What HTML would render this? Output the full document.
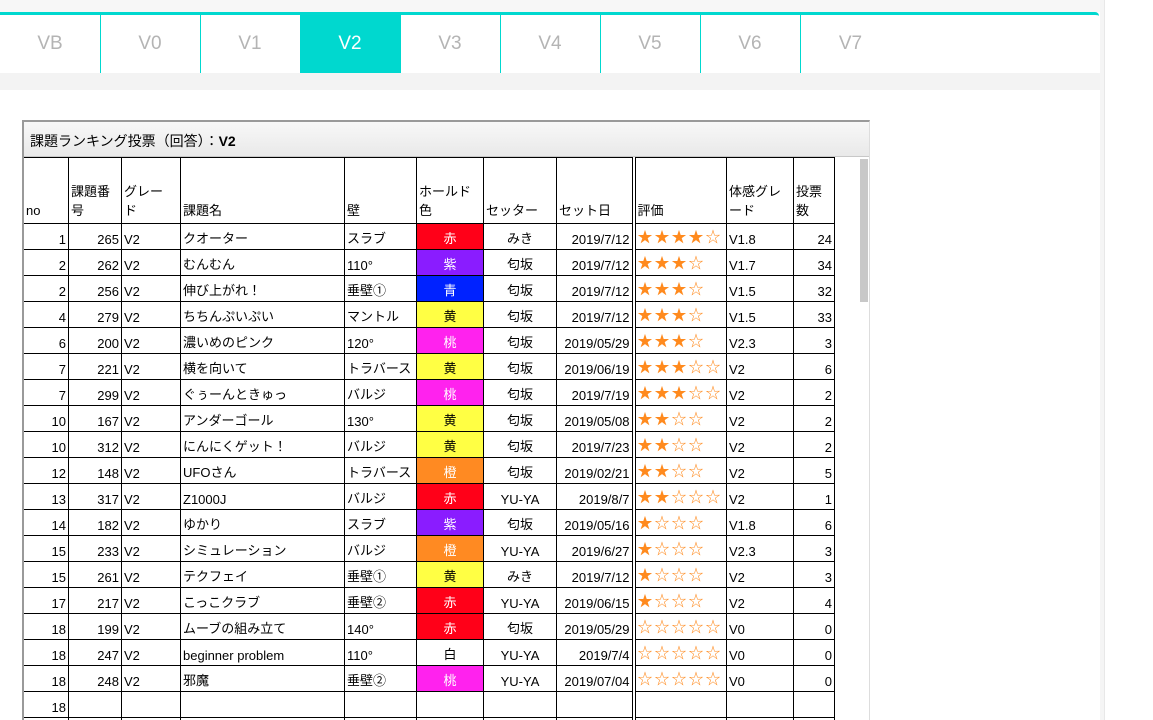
<!DOCTYPE html>
<html><head><meta charset="utf-8"><style>
body{margin:0;width:1153px;height:720px;overflow:hidden;background:#fff;font-family:"Liberation Sans","Noto Sans CJK JP",sans-serif;position:relative}
.top{position:absolute;left:0;top:0;width:1100px;height:12px;background:#f7f7f7}
.tabs{position:absolute;left:0;top:12px;width:1099px;height:58px;border-top:3px solid #00d8cf;background:#fff;border-top-right-radius:4px}
.tab{position:absolute;top:0;width:101px;height:58px;line-height:58px;text-align:center;color:#b4b4b4;font-size:19px;border-right:1px solid #00d8cf;box-sizing:border-box}
.tab.on{background:#00d8cf;color:#fff}
.band{position:absolute;left:0;top:73px;width:1100px;height:17px;background:#f3f3f3}
.rline{position:absolute;left:1100px;top:0;width:4px;height:720px;background:#f5f5f5;border-right:1px solid #e8e8e8}
.panel{position:absolute;left:22px;top:120px;width:848px;height:600px;border:2px solid #9a9a9a;border-bottom:none;border-right:1px solid #ddd;background:#fff;overflow:hidden;box-sizing:border-box}
.hd{height:34px;line-height:38px;padding-left:6px;font-size:14px;background:linear-gradient(#f8f8f8,#e9e9e9);border-bottom:1px solid #c8c8c8}
.sb{position:absolute;left:836px;top:37px;width:8px;height:143px;background:#c8c8c8}
table{border-collapse:collapse;table-layout:fixed;font-size:13px;margin-left:-1px}
td{border:1px solid #000;height:23px;padding:0 2px;vertical-align:bottom;padding-bottom:2px;white-space:nowrap;overflow:hidden}
tr.h td{height:62px;line-height:19px;padding-bottom:3px}
.r{text-align:right}.c{text-align:center}
.d{border-right:4px double #000}
.s{color:#ff8a1e;font-size:15px;letter-spacing:2px}
</style></head><body>
<div class="top"></div>
<div class="rline"></div>
<div class="tabs">
<div class="tab" style="left:0">VB</div><div class="tab" style="left:100px">V0</div><div class="tab" style="left:200px">V1</div><div class="tab on" style="left:300px">V2</div><div class="tab" style="left:400px">V3</div><div class="tab" style="left:500px">V4</div><div class="tab" style="left:600px">V5</div><div class="tab" style="left:700px">V6</div><div class="tab" style="left:800px;border-right:none">V7</div>
</div>
<div class="band"></div>
<div class="panel">
<div class="hd">課題ランキング投票（回答）：<b>V2</b></div>
<div class="sb"></div>
<table>
<colgroup><col style="width:45px"><col style="width:53px"><col style="width:59px"><col style="width:164px"><col style="width:72px"><col style="width:67px"><col style="width:73px"><col style="width:77px"><col style="width:93px"><col style="width:67px"><col style="width:41px"></colgroup>
<tr class="h"><td>no</td><td>課題番<br>号</td><td>グレー<br>ド</td><td>課題名</td><td>壁</td><td>ホールド<br>色</td><td>セッター</td><td class="d">セット日</td><td>評価</td><td>体感グレ<br>ード</td><td>投票<br>数</td></tr>
<tr><td class="r">1</td><td class="r">265</td><td>V2</td><td>クオーター</td><td>スラブ</td><td class="c" style="background:#ff0018;color:#fff">赤</td><td class="c">みき</td><td class="r d">2019/7/12</td><td class="s">★★★★☆</td><td>V1.8</td><td class="r">24</td></tr>
<tr><td class="r">2</td><td class="r">262</td><td>V2</td><td>むんむん</td><td>110°</td><td class="c" style="background:#8a1cff;color:#fff">紫</td><td class="c">匂坂</td><td class="r d">2019/7/12</td><td class="s">★★★☆</td><td>V1.7</td><td class="r">34</td></tr>
<tr><td class="r">2</td><td class="r">256</td><td>V2</td><td>伸び上がれ！</td><td>垂壁①</td><td class="c" style="background:#0022ff;color:#fff">青</td><td class="c">匂坂</td><td class="r d">2019/7/12</td><td class="s">★★★☆</td><td>V1.5</td><td class="r">32</td></tr>
<tr><td class="r">4</td><td class="r">279</td><td>V2</td><td>ちちんぷいぷい</td><td>マントル</td><td class="c" style="background:#ffff44">黄</td><td class="c">匂坂</td><td class="r d">2019/7/12</td><td class="s">★★★☆</td><td>V1.5</td><td class="r">33</td></tr>
<tr><td class="r">6</td><td class="r">200</td><td>V2</td><td>濃いめのピンク</td><td>120°</td><td class="c" style="background:#ff22ee;color:#fff">桃</td><td class="c">匂坂</td><td class="r d">2019/05/29</td><td class="s">★★★☆</td><td>V2.3</td><td class="r">3</td></tr>
<tr><td class="r">7</td><td class="r">221</td><td>V2</td><td>横を向いて</td><td>トラバース</td><td class="c" style="background:#ffff44">黄</td><td class="c">匂坂</td><td class="r d">2019/06/19</td><td class="s">★★★☆☆</td><td>V2</td><td class="r">6</td></tr>
<tr><td class="r">7</td><td class="r">299</td><td>V2</td><td>ぐぅーんときゅっ</td><td>バルジ</td><td class="c" style="background:#ff22ee;color:#fff">桃</td><td class="c">匂坂</td><td class="r d">2019/7/19</td><td class="s">★★★☆☆</td><td>V2</td><td class="r">2</td></tr>
<tr><td class="r">10</td><td class="r">167</td><td>V2</td><td>アンダーゴール</td><td>130°</td><td class="c" style="background:#ffff44">黄</td><td class="c">匂坂</td><td class="r d">2019/05/08</td><td class="s">★★☆☆</td><td>V2</td><td class="r">2</td></tr>
<tr><td class="r">10</td><td class="r">312</td><td>V2</td><td>にんにくゲット！</td><td>バルジ</td><td class="c" style="background:#ffff44">黄</td><td class="c">匂坂</td><td class="r d">2019/7/23</td><td class="s">★★☆☆</td><td>V2</td><td class="r">2</td></tr>
<tr><td class="r">12</td><td class="r">148</td><td>V2</td><td>UFOさん</td><td>トラバース</td><td class="c" style="background:#ff8a22;color:#fff">橙</td><td class="c">匂坂</td><td class="r d">2019/02/21</td><td class="s">★★☆☆</td><td>V2</td><td class="r">5</td></tr>
<tr><td class="r">13</td><td class="r">317</td><td>V2</td><td>Z1000J</td><td>バルジ</td><td class="c" style="background:#ff0018;color:#fff">赤</td><td class="c">YU-YA</td><td class="r d">2019/8/7</td><td class="s">★★☆☆☆</td><td>V2</td><td class="r">1</td></tr>
<tr><td class="r">14</td><td class="r">182</td><td>V2</td><td>ゆかり</td><td>スラブ</td><td class="c" style="background:#8a1cff;color:#fff">紫</td><td class="c">匂坂</td><td class="r d">2019/05/16</td><td class="s">★☆☆☆</td><td>V1.8</td><td class="r">6</td></tr>
<tr><td class="r">15</td><td class="r">233</td><td>V2</td><td>シミュレーション</td><td>バルジ</td><td class="c" style="background:#ff8a22;color:#fff">橙</td><td class="c">YU-YA</td><td class="r d">2019/6/27</td><td class="s">★☆☆☆</td><td>V2.3</td><td class="r">3</td></tr>
<tr><td class="r">15</td><td class="r">261</td><td>V2</td><td>テクフェイ</td><td>垂壁①</td><td class="c" style="background:#ffff44">黄</td><td class="c">みき</td><td class="r d">2019/7/12</td><td class="s">★☆☆☆</td><td>V2</td><td class="r">3</td></tr>
<tr><td class="r">17</td><td class="r">217</td><td>V2</td><td>こっこクラブ</td><td>垂壁②</td><td class="c" style="background:#ff0018;color:#fff">赤</td><td class="c">YU-YA</td><td class="r d">2019/06/15</td><td class="s">★☆☆☆</td><td>V2</td><td class="r">4</td></tr>
<tr><td class="r">18</td><td class="r">199</td><td>V2</td><td>ムーブの組み立て</td><td>140°</td><td class="c" style="background:#ff0018;color:#fff">赤</td><td class="c">匂坂</td><td class="r d">2019/05/29</td><td class="s">☆☆☆☆☆</td><td>V0</td><td class="r">0</td></tr>
<tr><td class="r">18</td><td class="r">247</td><td>V2</td><td>beginner problem</td><td>110°</td><td class="c">白</td><td class="c">YU-YA</td><td class="r d">2019/7/4</td><td class="s">☆☆☆☆☆</td><td>V0</td><td class="r">0</td></tr>
<tr><td class="r">18</td><td class="r">248</td><td>V2</td><td>邪魔</td><td>垂壁②</td><td class="c" style="background:#ff22ee;color:#fff">桃</td><td class="c">YU-YA</td><td class="r d">2019/07/04</td><td class="s">☆☆☆☆☆</td><td>V0</td><td class="r">0</td></tr>
<tr><td class="r" style="height:19px">18</td><td></td><td></td><td></td><td></td><td></td><td></td><td class="d"></td><td></td><td></td><td></td></tr>
<tr><td class="r">18</td><td></td><td></td><td></td><td></td><td></td><td></td><td class="d"></td><td></td><td></td><td></td></tr>
</table>
</div>
</body></html>
